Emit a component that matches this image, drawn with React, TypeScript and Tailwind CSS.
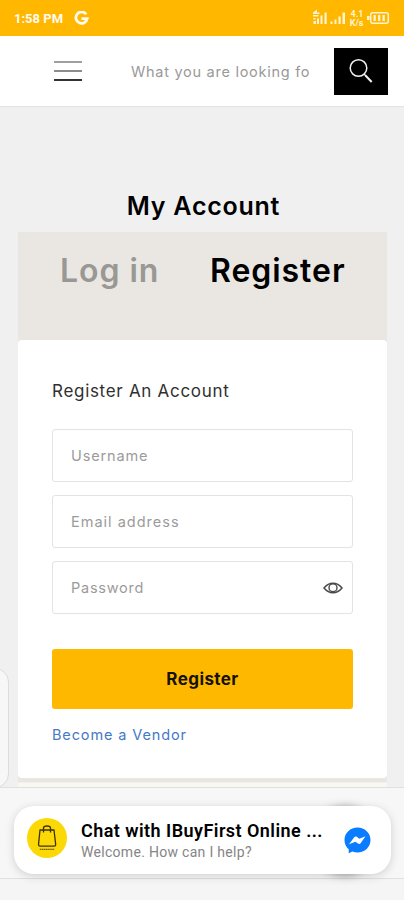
import React, { useState } from 'react';

interface Field {
  name: string;
  placeholder: string;
  type: string;
  className: string;
}

const fields: Field[] = [
  { name: 'username', placeholder: 'Username', type: 'text', className: 'tracking-[0.85px]' },
  { name: 'email', placeholder: 'Email address', type: 'email', className: 'tracking-[1px]' },
  { name: 'password', placeholder: 'Password', type: 'password', className: 'tracking-[0.75px]' },
];

const StatusIcons = () => (
  <svg width="80" height="20" viewBox="0 0 80 20" fill="#fff4d4">
    {/* first sim, with network badge */}
    <path d="M1 4.5 5 1.500v3h2.500V6H1zM1 7h5.500v1.500H1zM1.500 10h2v1.500h-2zM1.500 13h2.500v3H1.500zM5 10.500h2V16H5zM8.500 7.500h2V16h-2zM12.500 4.500h2.200V16h-2.200z" />
    {/* second sim */}
    <path d="M18.500 13.500h2V16h-2zM22.500 11.500h2V16h-2zM26.500 8.500h2.200V16h-2.200zM30.500 4.500h2.500V16h-2.500z" />
    <text x="38.5" y="9" fontFamily="Roboto, sans-serif" fontSize="9" fontWeight="700">4.1</text>
    <text x="37.8" y="17.500" fontFamily="Roboto, sans-serif" fontSize="9" fontWeight="700">K/s</text>
    <rect x="58.7" y="4.7" width="17.6" height="10.6" rx="2" fill="none" stroke="#fff4d4" strokeWidth="1.5" />
    <path d="M55 8h2.500v4H55zM61.500 7h2.300v6h-2.300zM66 7h2.300v6H66zM70.500 7h2.300v6h-2.300z" />
  </svg>
);

const GoogleIcon = () => (
  <svg width="15" height="15" viewBox="0 0 15 15" fill="none" stroke="#fffaf0" strokeWidth="2.8">
    <path d="M12.2 3.3A5.7 5.7 0 1 0 13.2 7.6H7.5" />
  </svg>
);

const SearchIcon = () => (
  <svg width="26" height="26" viewBox="0 0 26 26" fill="none" stroke="#f2f2f2" strokeWidth="1.5">
    <circle cx="10.5" cy="10" r="8.3" />
    <path d="m16 16 2 2" />
    <path d="m17.5 17.5 6.200 6.5" strokeWidth="2" />
  </svg>
);

const EyeIcon = () => (
  <svg width="20" height="14" viewBox="0 0 20 14" fill="none" stroke="#4a4a4a" strokeWidth="1.5">
    <path d="M1 7c3-3.600 6-4.700 9-4.700S16 3.400 19 7c-3 3.600-6 4.700-9 4.700S4 10.600 1 7z" />
    <circle cx="10" cy="6.8" r="4" strokeWidth="1.4" />
  </svg>
);

const BagIcon = () => (
  <svg width="40" height="40" viewBox="0 0 40 40" fill="none" stroke="#3b3200" strokeWidth="1.3" strokeLinejoin="round">
    <path d="M13 12h14l1.700 14.500c0 1-.7 1.700-1.700 1.700H13.200c-1 0-1.700-.7-1.700-1.700z" />
    <path d="M16.500 14.500v-4.500c0-1.500 1.200-2 3.500-2s3.500.5 3.500 2v4.500" />
    <path d="M12.800 31.300h14.400" strokeWidth="0.9" strokeDasharray="1.500 .4" />
  </svg>
);

const MessengerIcon = () => (
  <svg width="27" height="27" viewBox="0 0 27 27">
    <path fill="#0a7cff" d="M13.500 .5C6.300 .5 .5 6 .5 13c0 3.700 1.600 7 4.200 9.300V26.300l3.700-1.700c1.600.6 3.300.9 5.100.9 7.200 0 13-5.500 13-12.500S20.700 .5 13.500 .5z" />
    <path fill="#fff" d="m5 17.200 5.200-7c.7-.9 1.700-1 2.600-.4l2.500 2 6.200-2.500-4.900 6.900c-.7.9-1.700 1-2.600.4l-2.600-1.900z" />
  </svg>
);

export default function App() {
  const [showPassword, setShowPassword] = useState(false);

  return (
    <div className="relative flex h-[900px] w-[404px] flex-col overflow-hidden bg-[#f0f0f0] font-['Inter',sans-serif] text-black">
      <div className="flex h-9 shrink-0 items-center bg-[#ffb700] pr-[12px] pl-[14px]">
        <span className="font-['Roboto',sans-serif] text-[13px] leading-none font-bold text-[#fffaf0]">1:58 PM</span>
        <span className="ml-[11px]"><GoogleIcon /></span>
        <span className="ml-auto"><StatusIcons /></span>
      </div>

      <header className="flex h-[71px] shrink-0 items-center border-b border-[#e4e4e4] bg-white pr-4 pl-[54px]">
        <button className="flex w-[28px] flex-col gap-[7px]" aria-label="Menu">
          <span className="h-[2px] bg-[#a0a0a0]" />
          <span className="h-[2px] bg-[#8c8c8c]" />
          <span className="h-[2px] bg-[#333]" />
        </button>
        <input
          className="mt-0.5 ml-[49px] w-[180px] text-[14.5px] tracking-[0.73px] outline-none placeholder:text-[#999]"
          placeholder="What you are looking for"
        />
        <button className="ml-auto flex h-[47px] w-[54px] items-center justify-center bg-black" aria-label="Search">
          <SearchIcon />
        </button>
      </header>

      <main className="pt-[83px] pr-[17px] pl-[18px]">
        <h1 className="pl-0.5 text-center text-[25px] leading-[32px] font-semibold tracking-[0.75px]">My Account</h1>
        <div className="mt-[10px] h-[550px] bg-[#eae7e2]">
          <div className="flex h-[108px] pt-[19px] pl-[42px] text-[32px] leading-[40px] font-semibold tracking-[0.95px]">
            <button className="h-10 w-[150px] text-left tracking-[0.95px] text-[#999895]">Log in</button>
            <button className="h-10 text-left tracking-[0.95px]">Register</button>
          </div>

          <form className="h-[438px] rounded-[4px] bg-white px-[34px] pt-[38px]">
            <h2 className="text-[17px] leading-[26px] tracking-[0.7px] text-[#303030]">Register An Account</h2>
            <div className="mt-[25px] flex flex-col gap-[13px]">
              {fields.map((field) => (
                <div key={field.name} className="flex h-[53px] items-center rounded-[3px] border-[1.5px] border-[#e3e3e3] pl-[18px]">
                  <input
                    name={field.name}
                    type={field.type === 'password' && showPassword ? 'text' : field.type}
                    placeholder={field.placeholder}
                    className={`min-w-0 flex-1 text-[14.5px] outline-none placeholder:text-[#9b9b9b] ${field.className}`}
                  />
                  {field.type === 'password' && (
                    <button type="button" className="mr-[9px]" onClick={() => setShowPassword(!showPassword)} aria-label="Show password">
                      <EyeIcon />
                    </button>
                  )}
                </div>
              ))}
            </div>
            <button type="button" className="mt-[35px] h-[60px] w-full rounded-[3px] bg-[#ffb800] pt-0.5 text-[17px] font-bold tracking-[0.4px] text-[#161200]">
              Register
            </button>
            <a className="mt-[15px] block text-[14.5px] leading-[22px] tracking-[0.88px] text-[#4579c7]">Become a Vendor</a>
          </form>
        </div>
      </main>

      {/* side drawer handle */}
      <div className="absolute top-[668px] -left-5 h-[120px] w-[29px] rounded-[14px] border border-[#dcdcdc] bg-[#f7f7f7]" />

      <footer className="absolute inset-x-0 top-[783px] h-[117px]">
        <div className="mr-[17px] ml-[18px] h-[4px] bg-[#f8f7f0]" />
        <div className="h-[92px] border-y border-[#e0e0e0] bg-[#f7f7f7] pt-[18px] pr-[13px] pl-[14px]">
          <div className="relative">
            {/* round launcher shadow showing behind the card */}
            <div className="absolute right-[16px] bottom-0 h-[68px] w-[60px] rounded-full shadow-[0_1px_10px_rgba(0,0,0,0.35)]" />
            <div className="relative flex h-[68px] items-center rounded-[20px] bg-white pr-5 pl-[13px] font-['Roboto',sans-serif] shadow-[0_2px_10px_rgba(0,0,0,0.16)]">
              <div className="-mt-1 size-10 rounded-full bg-[#fcd807]">
                <BagIcon />
              </div>
              <div className="mt-[3px] ml-[14px] whitespace-nowrap">
                <p className="text-[18px] leading-[22px] font-semibold tracking-[0.45px]">Chat with IBuyFirst Online ...</p>
                <p className="text-[14px] leading-[21px] tracking-[0.3px] text-[#858585]">Welcome. How can I help?</p>
              </div>
              <span className="ml-auto"><MessengerIcon /></span>
            </div>
          </div>
        </div>
        <div className="h-[21px] bg-[#f5f5f5]" />
      </footer>
    </div>
  );
}
